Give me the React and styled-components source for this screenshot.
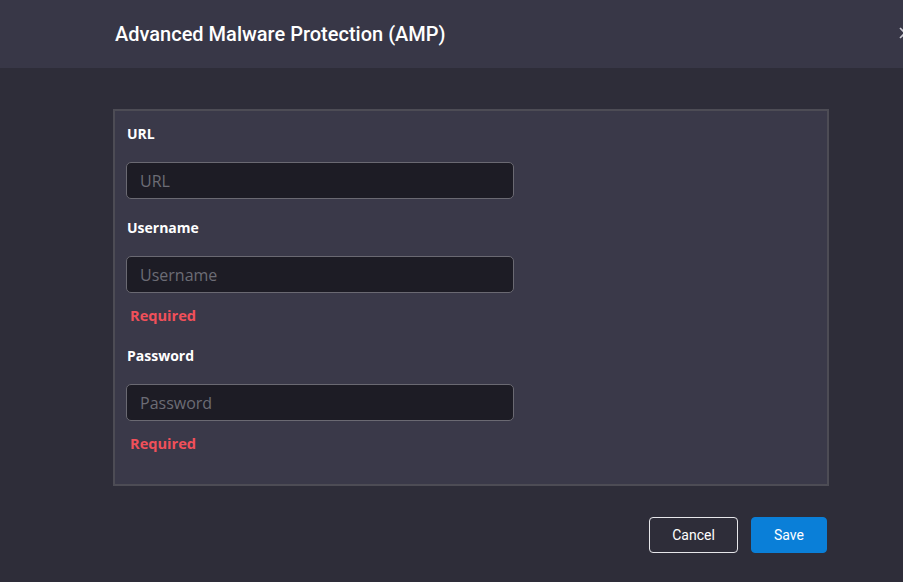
import React from 'react'
import styled, { createGlobalStyle } from 'styled-components'

const GlobalStyle = createGlobalStyle`
  html, body {
    margin: 0;
    padding: 0;
    background: #2e2d39;
    overflow: hidden;
  }
  * { box-sizing: border-box; }
`

const Modal = styled.div`
  width: 903px;
  height: 582px;
  background: #2e2d39;
  display: flex;
  flex-direction: column;
  position: relative;
  overflow: hidden;
`

const Header = styled.header`
  height: 68px;
  flex-shrink: 0;
  background: #383747;
  display: flex;
  align-items: center;
  padding-left: 115px;
  position: relative;
`

const Title = styled.h1`
  margin: 0;
  color: #ffffff;
  font-family: Roboto, 'Liberation Sans', sans-serif;
  font-weight: 500;
  font-size: 20px;
`

const Close = styled.button`
  position: absolute;
  right: -8px;
  top: 27px;
  width: 12px;
  height: 12px;
  background: none;
  border: none;
  padding: 0;
  color: #c9c8d2;
  display: flex;
`

const Body = styled.main`
  flex: 1;
  padding: 41px 74px 0 113px;
  display: flex;
  flex-direction: column;
`

const Panel = styled.section`
  width: 716px;
  height: 377px;
  background: #3a3949;
  border: 2px solid #4d4c55;
  padding: 13px 11px 0;
  display: flex;
  flex-direction: column;
  gap: 19px;
`

const Field = styled.div`
  display: flex;
  flex-direction: column;
`

const Label = styled.label`
  color: #ffffff;
  font-family: 'Open Sans', 'Liberation Sans', sans-serif;
  font-weight: 700;
  font-size: 14px;
  line-height: 20px;
  margin: 0 0 18px 1px;
`

const Input = styled.input`
  width: 388px;
  height: 37px;
  background: #1d1c25;
  border: 1px solid #6a6972;
  border-radius: 5px;
  padding: 0 13px;
  color: #e0e0e6;
  font-family: 'Open Sans', 'Liberation Sans', sans-serif;
  font-size: 16px;
  outline: none;

  &::placeholder {
    color: #6c6c75;
  }
`

const Error = styled.span`
  color: #f0505a;
  font-family: 'Open Sans', 'Liberation Sans', sans-serif;
  font-weight: 700;
  font-size: 14.6px;
  line-height: 20px;
  margin: 12px 0 2px 4px;
`

const Footer = styled.footer`
  width: 716px;
  display: flex;
  justify-content: flex-end;
  gap: 13px;
  padding: 31px 2px 0 0;
`

const Button = styled.button`
  height: 36px;
  width: ${p => (p.$primary ? '76px' : '89px')};
  border-radius: 4px;
  border: 1px solid ${p => (p.$primary ? '#0a7fd8' : '#e6e6ea')};
  background: ${p => (p.$primary ? '#0a7fd8' : 'transparent')};
  color: #ffffff;
  font-family: Roboto, 'Liberation Sans', sans-serif;
  font-size: 14px;
  cursor: pointer;
`

const fields = [
  { name: 'URL', type: 'text', required: false },
  { name: 'Username', type: 'text', required: true },
  { name: 'Password', type: 'password', required: true },
]

export default function App() {
  return (
    <>
      <GlobalStyle />
      <Modal>
        <Header>
          <Title>Advanced Malware Protection (AMP)</Title>
          <Close aria-label="Close">
            <svg width="12" height="12" viewBox="0 0 12 12">
              <path d="M1 1L11 11M11 1L1 11" stroke="currentColor" strokeWidth="1.6" />
            </svg>
          </Close>
        </Header>
        <Body>
          <Panel>
            {fields.map(f => (
              <Field key={f.name}>
                <Label>{f.name}</Label>
                <Input type={f.type} placeholder={f.name} />
                {f.required && <Error>Required</Error>}
              </Field>
            ))}
          </Panel>
          <Footer>
            <Button>Cancel</Button>
            <Button $primary>Save</Button>
          </Footer>
        </Body>
      </Modal>
    </>
  )
}
